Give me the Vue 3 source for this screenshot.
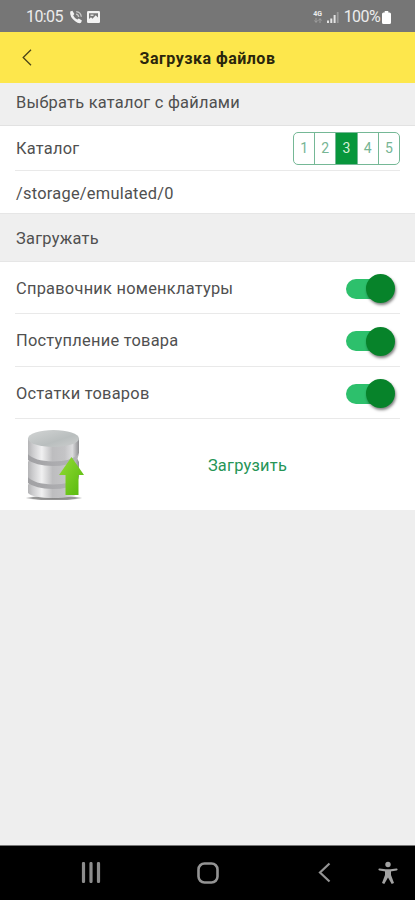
<script setup>
import { ref, reactive } from 'vue'

const catalogs = [1, 2, 3, 4, 5]
const current = ref(3)

const options = reactive([
    { id: 'items', title: 'Справочник номенклатуры', on: true },
    { id: 'income', title: 'Поступление товара', on: true },
    { id: 'rest', title: 'Остатки товаров', on: true },
])
</script>

<template>
    <div class="screen">
        <div class="status">
            <span class="time">10:05</span>
            <svg class="call" width="14" height="14" viewBox="0 0 14 14">
                <path d="M1.2 1.5 L3.4 .8 L5.3 4 L4.2 5.5 Q5.6 8.3 8.3 9.6 L9.8 8.5 L12.9 10.5 L12 12.8 Q9.8 14 6.2 11.3 Q.4 6.8 1.2 1.5Z" fill="#f2f2f2" />
                <path d="M7 4.2 Q9.4 4.5 9.7 7 M7.2 1.6 Q11.8 2 12.3 6.8" fill="none" stroke="#c8c8c8" stroke-width="1.3" />
            </svg>
            <svg class="photo" width="13" height="12" viewBox="0 0 13 12">
                <rect width="13" height="12" rx="1.3" fill="#f2f2f2" />
                <path d="M2 2.3 H11 V6.5 L8.7 4.3 L5.5 7.7 L4 6.3 L2 8Z" fill="#777" />
                <path d="M3.5 3.5 H6.5 V5 H3.5Z" fill="#ddd" />
            </svg>
            <div class="net">
                <b>4G</b>
                <svg width="8" height="5" viewBox="0 0 8 5">
                    <path d="M2 0v4M.5 2.500L2 4.500L3.500 2.500M6 5V1M4.500 2.500L6 .5L7.500 2.500" fill="none" stroke="#a4a4a4" stroke-width=".9" />
                </svg>
            </div>
            <svg class="signal" width="12" height="12" viewBox="0 0 12 12">
                <path d="M0 9.500h2v2.500H0z M3.300 7.500h2v4.500h-2z M6.600 4h2v8h-2z" fill="#e4e4e4" />
                <path d="M9.8 1h1.8v11H9.8z" fill="#9a9a9a" />
            </svg>
            <span class="percent">100%</span>
            <svg class="battery" width="9" height="13" viewBox="0 0 9 13">
                <path d="M2.7 0h3.6v1.5h1.2Q9 1.5 9 3v8.500Q9 13 7.500 13h-6Q0 13 0 11.500V3q0-1.500 1.500-1.500h1.200z" fill="#fff" />
            </svg>
        </div>

        <div class="header">
            <svg class="back" width="10" height="17" viewBox="0 0 10 17">
                <path d="M9 .8 L1.200 8.500 L9 16.200" fill="none" stroke="#4a4418" stroke-width="1.300" />
            </svg>
            <span class="title">Загрузка файлов</span>
        </div>

        <div class="section first">Выбрать каталог с файлами</div>
        <div class="list">
            <div class="row catalog">
                <span class="label">Каталог</span>
                <div class="segments">
                    <span
                        v-for="n in catalogs"
                        :key="n"
                        class="segment"
                        :class="{ active: n === current }"
                        @click="current = n"
                    >{{ n }}</span>
                </div>
            </div>
            <div class="row path">/storage/emulated/0</div>
        </div>

        <div class="section second">Загружать</div>
        <div class="list">
            <div class="row option" :class="opt.id" v-for="opt in options" :key="opt.id">
                <span>{{ opt.title }}</span>
                <div class="toggle" :class="{ on: opt.on }" @click="opt.on = !opt.on">
                    <div class="knob"></div>
                </div>
            </div>
            <div class="upload">
                <svg class="base" width="62" height="72" viewBox="0 0 62 72">
                    <defs>
                        <linearGradient id="metal" x1="0" x2="1">
                            <stop offset="0" stop-color="#b4b4b6" />
                            <stop offset=".1" stop-color="#cdcdcf" />
                            <stop offset=".27" stop-color="#f0f0f1" />
                            <stop offset=".48" stop-color="#bdbdbf" />
                            <stop offset=".72" stop-color="#c4c4c6" />
                            <stop offset=".87" stop-color="#dcdcde" />
                            <stop offset="1" stop-color="#8d8d90" />
                        </linearGradient>
                        <linearGradient id="band" x1="0" x2="1">
                            <stop offset="0" stop-color="#a0a0a3" />
                            <stop offset=".4" stop-color="#a9a9ac" />
                            <stop offset="1" stop-color="#b4b4b7" />
                        </linearGradient>
                        <linearGradient id="top" x1="0" x2="1" y2="1">
                            <stop offset="0" stop-color="#d2d4d4" />
                            <stop offset=".6" stop-color="#b9bebe" />
                            <stop offset="1" stop-color="#cdcfcf" />
                        </linearGradient>
                        <linearGradient id="arrow" x1="0" x2="1" y1="0" y2="1">
                            <stop offset="0" stop-color="#95dc35" />
                            <stop offset="1" stop-color="#54b80c" />
                        </linearGradient>
                        <radialGradient id="shade">
                            <stop offset="0" stop-color="#808080" />
                            <stop offset=".75" stop-color="#999" />
                            <stop offset="1" stop-color="#aaa" stop-opacity="0" />
                        </radialGradient>
                    </defs>
                    <ellipse cx="29" cy="69" rx="29" ry="2.500" fill="url(#shade)" />
                    <path d="M3 9 V25 L4 31 L3 33 V48 L4 54 L3 56 V64 Q8 69 28 69 Q49 69 53 64 V56 L52 52 L54 48 V33 L52 29 L54 24 V9Z" fill="url(#metal)" />
                    <path d="M3 25 Q9 32 28 32.500 Q46 32.500 54 25 L52 31 Q44 37 28 37 Q10 36.500 3 31Z" fill="url(#band)" />
                    <path d="M3 48 Q9 55 28 55.500 Q46 55.500 54 48 L52 54 Q44 60 28 60 Q10 59.500 3 54Z" fill="url(#band)" />
                    <ellipse cx="28.500" cy="9.500" rx="25.500" ry="8.500" fill="url(#top)" />
                    <path d="M46.500 28 L59 46 H53.500 V66 H40.500 V46 H34Z" fill="url(#arrow)" />
                </svg>
                <div class="action">Загрузить</div>
            </div>
        </div>

        <div class="empty"></div>

        <div class="nav">
            <svg width="20" height="21" viewBox="0 0 20 21">
                <path d="M2.500 1.500v18M10 1.500v18M17.500 1.500v18" stroke="#8c8c8c" stroke-width="3.200" stroke-linecap="round" />
            </svg>
            <svg class="home" width="22" height="22" viewBox="0 0 22 22">
                <rect x="1.500" y="1.500" width="19" height="19" rx="6" fill="none" stroke="#949494" stroke-width="2.600" />
            </svg>
            <svg class="prev" width="13" height="21" viewBox="0 0 13 21">
                <path d="M11.500 1.500 L2 10.500 L11.500 19.500" fill="none" stroke="#949494" stroke-width="2.200" />
            </svg>
            <svg class="person" width="20" height="24" viewBox="0 0 20 24">
                <circle cx="10" cy="3.500" r="2.700" fill="#a2a2a2" />
                <path d="M1.500 8.500 L7.500 9.300 H12.500 L18.500 8.500" fill="none" stroke="#a2a2a2" stroke-width="2.200" stroke-linecap="round" />
                <path d="M7 9 H13 V14 L16 22 L13.700 23 L10 16.500 L6.300 23 L4 22 L7 14Z" fill="#a2a2a2" />
            </svg>
        </div>
    </div>
</template>

<style>
body {
    margin: 0;
}
</style>

<style scoped>
.screen {
    width: 415px;
    height: 900px;
    display: flex;
    flex-direction: column;
    overflow: hidden;
    background: #eee;
    color: #505050;
    font-family: Roboto, "Liberation Sans", sans-serif;
    font-size: 16.4px;
    letter-spacing: 0.25px;
    line-height: 20px;
}

.status {
    height: 32px;
    flex: none;
    box-sizing: border-box;
    padding: 2px 24px 0 26px;
    display: flex;
    align-items: center;
    background: #767676;
    color: #ececec;
    font-size: 16px;
    letter-spacing: -0.6px;
}

.call {
    margin-left: 6px;
}

.photo {
    margin-left: 4px;
}

.net {
    margin-left: auto;
    margin-right: 4px;
    width: 10px;
    display: flex;
    flex-direction: column;
    align-items: center;
    font-size: 7px;
    line-height: 7px;
    letter-spacing: 0;
}

.percent {
    margin-left: 5px;
    margin-right: 2px;
}

.header {
    height: 51px;
    flex: none;
    display: flex;
    align-items: center;
    background: #fde74c;
    color: #2a260c;
}

.back {
    margin-left: 22px;
}

.title {
    flex: 1;
    margin-right: 32px;
    padding-top: 2px;
    text-align: center;
    font-size: 16px;
    font-weight: 700;
    letter-spacing: 0.5px;
}

.section {
    flex: none;
    box-sizing: border-box;
    padding-left: 16px;
    display: flex;
    align-items: center;
    background: #efefef;
}

.first {
    height: 43px;
    padding-bottom: 3px;
    border-bottom: 1px solid #e2e2e2;
}

.second {
    height: 49px;
    padding-top: 3px;
    border-top: 1px solid #e6e6e6;
    border-bottom: 1px solid #e6e6e6;
}

.list {
    flex: none;
    background: #fff;
}

.row {
    box-sizing: border-box;
    margin-left: 15px;
    padding: 0 0 0 1px;
    display: flex;
    align-items: center;
    justify-content: space-between;
}

.catalog {
    height: 45px;
    margin-right: 15px;
    border-bottom: 1px solid #e9e9e9;
}

.label {
    padding-top: 1px;
}

.path {
    height: 42px;
    padding-top: 4px;
}

.segments {
    display: flex;
    box-sizing: border-box;
    width: 107px;
    height: 33px;
    border: 1px solid #75b896;
    border-radius: 5px;
    overflow: hidden;
}

.segment {
    flex: 1;
    display: flex;
    align-items: center;
    justify-content: center;
    color: #76b594;
    font-size: 14px;
    letter-spacing: 0;
    cursor: pointer;
}

.segment + .segment {
    border-left: 1px solid #75b896;
}

.segment.active {
    background: #08963c;
    color: #d5f0d8;
}

.option {
    height: 52px;
    padding-top: 2px;
    margin-right: 15px;
    border-bottom: 1px solid #e9e9e9;
}

.income {
    height: 53px;
}

.toggle {
    width: 46px;
    height: 20px;
    margin-right: 8px;
    border-radius: 10px;
    background: #ccc;
    display: flex;
    align-items: center;
    cursor: pointer;
}

.toggle.on {
    background: #2dc06c;
    justify-content: flex-end;
}

.knob {
    width: 29px;
    height: 29px;
    flex: none;
    margin-right: -3px;
    border-radius: 50%;
    background: #07832a;
    box-shadow: 1px 2px 3px rgba(0, 0, 0, 0.5);
}

.upload {
    height: 91px;
    display: flex;
    align-items: center;
}

.base {
    margin-left: 25px;
}

.action {
    flex: 1;
    margin-right: 7px;
    padding-top: 3px;
    text-align: center;
    color: #259556;
}

.empty {
    flex: 1;
}

.nav {
    height: 55px;
    flex: none;
    box-sizing: border-box;
    border-top: 1px solid #777;
    padding-left: 81px;
    padding-bottom: 1px;
    display: flex;
    align-items: center;
    background: #000;
}

.home {
    margin-left: 96px;
}

.prev {
    margin-left: 99px;
}

.person {
    margin-left: 47px;
}
</style>
